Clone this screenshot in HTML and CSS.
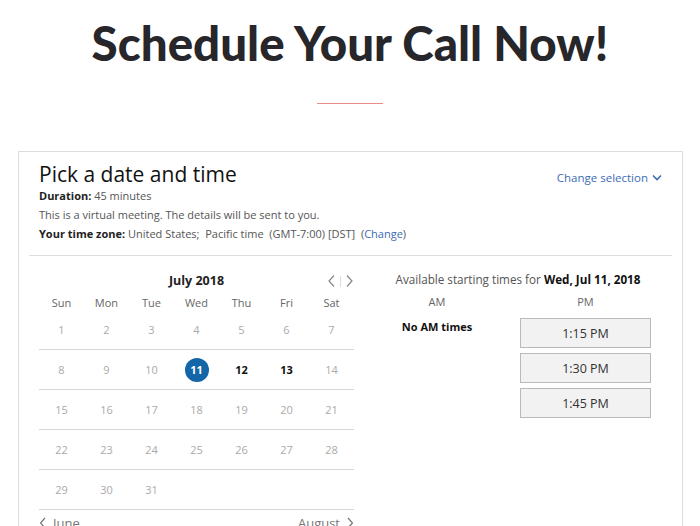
FILE: index.html
```html
<!DOCTYPE html>
<html lang="en">
<head>
  <meta charset="UTF-8" />
  <title>Schedule Your Call</title>
  <link rel="stylesheet" href="styles.css">
</head>
<body>

  <h1 class="page-title">Schedule Your Call Now!</h1>
  <div class="title-rule"></div>

  <div class="scheduler">
    <div class="sched-head">
      <div class="sched-info">
        <h2>Pick a date and time</h2>
        <p><b>Duration:</b> 45 minutes</p>
        <p>This is a virtual meeting. The details will be sent to you.</p>
        <p><b>Your time zone:</b> United States;&nbsp; Pacific time&nbsp; (GMT-7:00) [DST]&nbsp; (<a href="#">Change</a>)</p>
      </div>
      <a href="#" class="change-sel">Change selection
        <svg width="10" height="7" viewBox="0 0 10 7"><path d="M1 1.5 L5 5.5 L9 1.5" fill="none" stroke="#3d6bb3" stroke-width="1.6"/></svg>
      </a>
    </div>

    <div class="sched-body">
      <div class="calendar">
        <div class="cal-top">
          <span class="cal-month">July 2018</span>
          <span class="cal-nav">
            <svg width="9" height="14" viewBox="0 0 9 14"><path d="M7 1.5 L2 7 L7 12.5" fill="none" stroke="#888" stroke-width="1.2"/></svg>
            <i class="nav-sep"></i>
            <svg width="9" height="14" viewBox="0 0 9 14"><path d="M2 1.5 L7 7 L2 12.5" fill="none" stroke="#888" stroke-width="1.2"/></svg>
          </span>
        </div>
        <div class="cal-days">
          <span>Sun</span><span>Mon</span><span>Tue</span><span>Wed</span><span>Thu</span><span>Fri</span><span>Sat</span>
        </div>
        <div class="cal-grid" id="calGrid"></div>
        <div class="cal-foot">
          <a href="#">
            <svg width="8" height="12" viewBox="0 0 8 12"><path d="M6 1 L1.5 6 L6 11" fill="none" stroke="#777" stroke-width="1.2"/></svg>
            June
          </a>
          <a href="#">
            August
            <svg width="8" height="12" viewBox="0 0 8 12"><path d="M2 1 L6.5 6 L2 11" fill="none" stroke="#777" stroke-width="1.2"/></svg>
          </a>
        </div>
      </div>

      <div class="times">
        <div class="times-title">Available starting times for <b>Wed, Jul 11, 2018</b></div>
        <div class="times-cols">
          <div class="col">
            <div class="col-label">AM</div>
            <div class="no-times">No AM times</div>
          </div>
          <div class="col">
            <div class="col-label">PM</div>
            <button class="slot">1:15 PM</button>
            <button class="slot">1:30 PM</button>
            <button class="slot">1:45 PM</button>
          </div>
        </div>
      </div>
    </div>
  </div>

  <script>
    const grid = document.getElementById('calGrid');
    const open = [12, 13];

    // July 2018 starts on a Sunday
    for (let d = 1; d <= 35; d++) {
      const cell = document.createElement('div');
      cell.classList.add('day');
      if (d <= 31) {
        const num = document.createElement('span');
        num.textContent = d;
        if (d === 11) num.classList.add('selected');
        else if (open.includes(d)) num.classList.add('open');
        cell.appendChild(num);
      }
      grid.appendChild(cell);
    }
  </script>

</body>
</html>
```

FILE: styles.css
```css
body {
  margin: 0;
  font-family: "Open Sans", Arial, sans-serif;
  color: #222;
  background: #fff;
}

.page-title {
  margin: 0;
  padding-top: 13px;
  text-align: center;
  font-family: Lato, "Open Sans", sans-serif;
  font-weight: 900;
  font-size: 47.5px;
  line-height: 60px;
  color: #26262b;
}

.title-rule {
  width: 66px;
  margin: 30px auto 47px;
  border-top: 1px solid #ec8c88;
}

.scheduler {
  margin: 0 17px 0 18px;
  border: 1px solid #ddd;
  padding: 0 10px;
  height: 400px;
}

.sched-head {
  display: flex;
  justify-content: space-between;
  align-items: flex-start;
  padding: 10px 10px 12px;
  border-bottom: 1px solid #ddd;
}

.sched-info h2 {
  margin: 0;
  font-weight: 400;
  font-size: 21px;
  line-height: 24px;
  color: #111;
}

.sched-info p {
  margin: 0;
  font-size: 11px;
  line-height: 19px;
  color: #555;
}

.sched-info b {
  color: #222;
}

.sched-info a,
.change-sel {
  color: #3d6bb3;
  text-decoration: none;
}

.change-sel {
  margin-top: 8px;
  font-size: 11.5px;
  display: flex;
  align-items: center;
  gap: 4px;
}

.sched-body {
  display: flex;
  padding-left: 10px;
}

.calendar {
  width: 315px;
  flex-shrink: 0;
}

.cal-top {
  position: relative;
  height: 34px;
  display: flex;
  align-items: flex-end;
  justify-content: center;
}

.cal-month {
  font-size: 12.5px;
  font-weight: 700;
  color: #222;
  line-height: 18px;
}

.cal-nav {
  position: absolute;
  right: 0;
  bottom: 2px;
  display: flex;
  align-items: center;
  gap: 4px;
}

.nav-sep {
  width: 1px;
  height: 11px;
  background: #ddd;
}

.cal-days,
.cal-grid {
  display: grid;
  grid-template-columns: repeat(7, 1fr);
  text-align: center;
}

.cal-days span {
  font-size: 11px;
  color: #666;
  line-height: 18px;
  padding-top: 4px;
  margin-bottom: -2px;
}

.day {
  box-sizing: border-box;
  height: 40px;
  display: flex;
  align-items: center;
  justify-content: center;
  border-bottom: 1px solid #d6d6d6;
  font-size: 11px;
  color: #aaa;
}

.day span {
  width: 24px;
  height: 24px;
  border-radius: 50%;
  display: flex;
  align-items: center;
  justify-content: center;
}

.day .open {
  color: #111;
  font-weight: 700;
}

.day .selected {
  background: #1466a8;
  color: #fff;
  font-weight: 700;
}

.cal-foot {
  display: flex;
  justify-content: space-between;
  padding-top: 4px;
}

.cal-foot a {
  display: flex;
  align-items: center;
  gap: 6px;
  font-size: 13px;
  color: #777;
  text-decoration: none;
}

.times {
  width: 308px;
  margin-left: 10px;
  flex-shrink: 0;
}

.times-title {
  text-align: center;
  font-size: 11.7px;
  color: #555;
  padding-top: 14px;
  line-height: 18px;
}

.times-title b {
  color: #111;
}

.times-cols {
  display: grid;
  grid-template-columns: 146px 131px;
  column-gap: 10px;
}

.col {
  display: flex;
  flex-direction: column;
  align-items: center;
}

.col-label {
  font-size: 11px;
  color: #666;
  line-height: 18px;
  padding-top: 5px;
  margin-bottom: 7px;
}

.no-times {
  font-size: 11px;
  font-weight: 700;
  color: #111;
  margin-top: 1px;
}

.slot {
  width: 131px;
  height: 30px;
  margin-bottom: 5px;
  background: #f2f2f2;
  border: 1px solid #b9b9b9;
  font-family: "Open Sans", Arial, sans-serif;
  font-size: 12.5px;
  color: #333;
  cursor: pointer;
}
```
